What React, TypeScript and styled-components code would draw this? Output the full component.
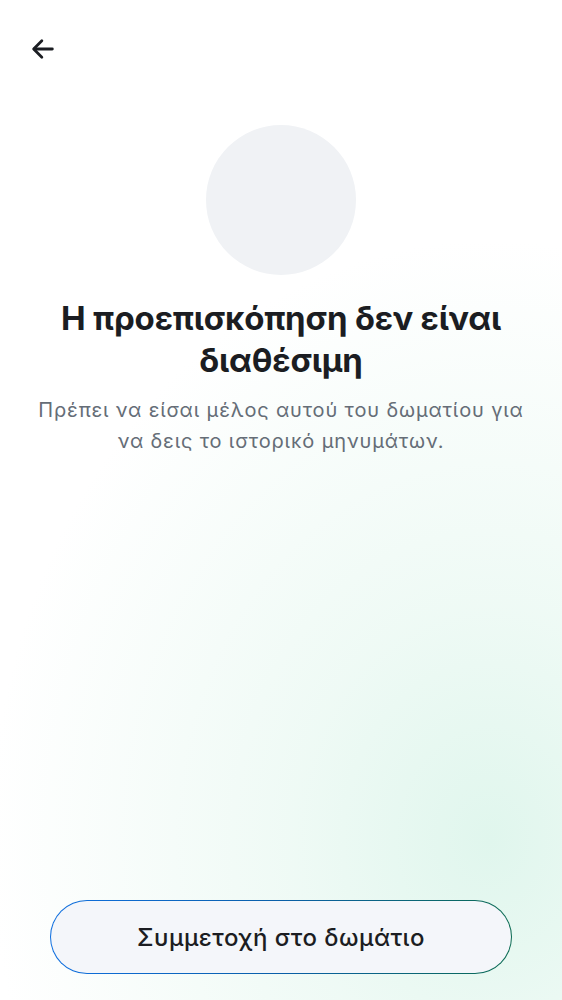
import React from "react";
import styled, { createGlobalStyle } from "styled-components";

const Global = createGlobalStyle`
  html, body { margin: 0; padding: 0; }
  body { font-family: Inter, "Noto Sans", sans-serif; background: #fff; }
  * { box-sizing: border-box; }
`;

const Page = styled.div`
  width: 562px;
  height: 1000px;
  position: relative;
  overflow: hidden;
  display: flex;
  flex-direction: column;
  background:
    radial-gradient(ellipse 500px 600px at 490px 840px, rgba(224, 246, 237, 1) 0%, rgba(232, 248, 241, 0.7) 40%, rgba(255, 255, 255, 0) 100%),
    #ffffff;
`;

const TopBar = styled.div`
  height: 100px;
  padding: 26px 0 0 20px;
`;

const BackButton = styled.button`
  width: 46px;
  height: 46px;
  border: none;
  background: transparent;
  padding: 0;
  display: flex;
  align-items: center;
  justify-content: center;
  color: #1b1d22;
  cursor: pointer;
`;

const Content = styled.div`
  display: flex;
  flex-direction: column;
  align-items: center;
  padding: 25px 12px 0;
`;

const Avatar = styled.div`
  width: 150px;
  height: 150px;
  border-radius: 50%;
  background: #f0f2f5;
`;

const Title = styled.h1`
  margin: 22px 0 0;
  font-size: 33px;
  line-height: 42px;
  font-weight: 700;
  color: #1b1d22;
  text-align: center;
  letter-spacing: -0.2px;
`;

const Subtitle = styled.p`
  margin: 14px 0 0;
  font-size: 20px;
  line-height: 31px;
  color: #656d77;
  text-align: center;
  letter-spacing: 0.85px;
`;

const Spacer = styled.div`
  flex: 1;
`;

const Footer = styled.div`
  padding: 0 50px 26px;
`;

const JoinButton = styled.button`
  width: 100%;
  height: 74px;
  border-radius: 37px;
  border: 1.5px solid transparent;
  background:
    linear-gradient(#f4f6fa, #f4f6fa) padding-box,
    linear-gradient(90deg, #0f6fe0 0%, #0a5fa8 50%, #0b6b52 100%) border-box;
  font-family: Inter, "Noto Sans", sans-serif;
  font-size: 24px;
  font-weight: 500;
  color: #1b1d22;
  letter-spacing: 0.5px;
  cursor: pointer;
`;

export default function App() {
  return (
    <>
      <Global />
      <Page>
        <TopBar>
          <BackButton aria-label="Back">
            <svg width="28" height="28" viewBox="0 0 24 24" fill="none" stroke="currentColor" strokeWidth="2.4" strokeLinecap="round" strokeLinejoin="round">
              <path d="M20 12H4.5" />
              <path d="M11 5l-7 7 7 7" />
            </svg>
          </BackButton>
        </TopBar>
        <Content>
          <Avatar />
          <Title>
            Η προεπισκόπηση δεν είναι
            <br />
            διαθέσιμη
          </Title>
          <Subtitle>
            Πρέπει να είσαι μέλος αυτού του δωματίου για
            <br />
            να δεις το ιστορικό μηνυμάτων.
          </Subtitle>
        </Content>
        <Spacer />
        <Footer>
          <JoinButton>Συμμετοχή στο δωμάτιο</JoinButton>
        </Footer>
      </Page>
    </>
  );
}
